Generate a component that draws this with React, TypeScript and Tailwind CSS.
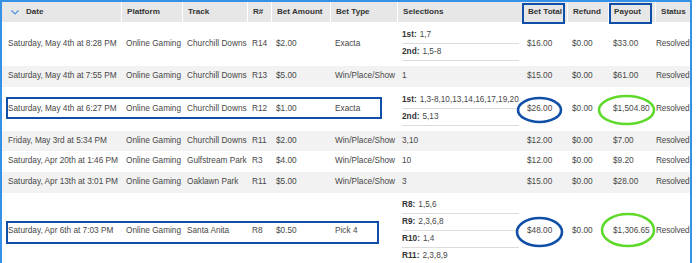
import React from "react";

type Sel = { label?: string; value: string };
type Row = {
  date: string;
  platform: string;
  track: string;
  race: string;
  amount: string;
  type: string;
  sel: Sel[];
  total: string;
  refund: string;
  payout: string;
  status: string;
  h: string;
  gray?: boolean;
};

const rows: Row[] = [
  { date: "Saturday, May 4th at 8:28 PM", platform: "Online Gaming", track: "Churchill Downs", race: "R14", amount: "$2.00", type: "Exacta", sel: [{ label: "1st:", value: "1,7" }, { label: "2nd:", value: "1,5-8" }], total: "$16.00", refund: "$0.00", payout: "$33.00", status: "Resolved", h: "h-[44px]" },
  { date: "Saturday, May 4th at 7:55 PM", platform: "Online Gaming", track: "Churchill Downs", race: "R13", amount: "$5.00", type: "Win/Place/Show", sel: [{ value: "1" }], total: "$15.00", refund: "$0.00", payout: "$61.00", status: "Resolved", h: "h-[21px]", gray: true },
  { date: "Saturday, May 4th at 6:27 PM", platform: "Online Gaming", track: "Churchill Downs", race: "R12", amount: "$1.00", type: "Exacta", sel: [{ label: "1st:", value: "1,3-8,10,13,14,16,17,19,20" }, { label: "2nd:", value: "5,13" }], total: "$26.00", refund: "$0.00", payout: "$1,504.80", status: "Resolved", h: "h-[44px]" },
  { date: "Friday, May 3rd at 5:34 PM", platform: "Online Gaming", track: "Churchill Downs", race: "R11", amount: "$2.00", type: "Win/Place/Show", sel: [{ value: "3,10" }], total: "$12.00", refund: "$0.00", payout: "$7.00", status: "Resolved", h: "h-[20px]", gray: true },
  { date: "Saturday, Apr 20th at 1:46 PM", platform: "Online Gaming", track: "Gulfstream Park", race: "R3", amount: "$4.00", type: "Win/Place/Show", sel: [{ value: "10" }], total: "$12.00", refund: "$0.00", payout: "$9.20", status: "Resolved", h: "h-[21px]" },
  { date: "Saturday, Apr 13th at 3:01 PM", platform: "Online Gaming", track: "Oaklawn Park", race: "R11", amount: "$5.00", type: "Win/Place/Show", sel: [{ value: "3" }], total: "$15.00", refund: "$0.00", payout: "$28.00", status: "Resolved", h: "h-[21px]", gray: true },
  { date: "Saturday, Apr 6th at 7:03 PM", platform: "Online Gaming", track: "Santa Anita", race: "R8", amount: "$0.50", type: "Pick 4", sel: [{ label: "R8:", value: "1,5,6" }, { label: "R9:", value: "2,3,6,8" }, { label: "R10:", value: "1,4" }, { label: "R11:", value: "2,3,8,9" }], total: "$48.00", refund: "$0.00", payout: "$1,306.65", status: "Resolved", h: "h-[76px]" },
];

const grid = "grid grid-cols-[119px_61px_65px_24px_59px_67px_125px_45px_41px_47px_35px]";
const cell = "flex items-center pl-[5px] whitespace-nowrap";

function Selections({ sel }: { sel: Sel[] }) {
  if (sel.length === 1 && !sel[0].label) {
    return <span>{sel[0].value}</span>;
  }
  return (
    <div className="flex flex-col w-[117px]">
      {sel.map((s, i) => (
        <div key={i} className="h-[17px] pt-[1px] flex items-center border-b border-[#dcdcdc]">
          <span className="font-bold text-[#333]">{s.label}</span>
          <span className="ml-[3px]">{s.value}</span>
        </div>
      ))}
    </div>
  );
}

export default function App() {
  return (
    <div className="relative w-[700px] h-[263px] overflow-hidden bg-white font-['Liberation_Sans',Arial,sans-serif] text-[8.25px] text-[#474747]">
      <div className="w-[692px] border-l-2 border-t-2 border-r-2 border-[#3491e6] h-[270px]">
        {/* header */}
        <div className={`${grid} h-[20px] bg-[#e7e7e7] font-bold text-[#333] text-[8.1px]`}>
          <div className="flex items-center pl-[9px] whitespace-nowrap">
            <svg width="8" height="5" viewBox="0 0 8 5" className="mr-[7px]">
              <polyline points="0.5,0.5 4,4 7.5,0.5" fill="none" stroke="#4a8fdc" strokeWidth="1.1" />
            </svg>
            Date
          </div>
          {["Platform", "Track", "R#", "Bet Amount", "Bet Type", "Selections", "Bet Total", "Refund", "Payout", "Status"].map((h) => (
            <div key={h} className={`${cell} border-l border-white`}>{h}</div>
          ))}
        </div>
        {rows.map((r, i) => (
          <div key={i} className={`${grid} ${r.h} ${r.gray ? "bg-[#f2f2f2]" : "bg-white"}`}>
            <div className={`${cell} pl-[6px]`}>{r.date}</div>
            <div className={cell}>{r.platform}</div>
            <div className={cell}>{r.track}</div>
            <div className={cell}>{r.race}</div>
            <div className={cell}>{r.amount}</div>
            <div className={cell}>{r.type}</div>
            <div className={cell}><Selections sel={r.sel} /></div>
            <div className={cell}>{r.total}</div>
            <div className={cell}>{r.refund}</div>
            <div className={cell}>{r.payout}</div>
            <div className="flex items-center pl-[1px] whitespace-nowrap tracking-[-0.1px]">{r.status}</div>
          </div>
        ))}
      </div>

      {/* annotation boxes */}
      <div className="absolute left-[522px] top-[3px] w-[43px] h-[21px] border-[2.5px] border-[#0f4fa8]" />
      <div className="absolute left-[609px] top-[3px] w-[43px] h-[21px] border-[2.5px] border-[#0f4fa8]" />
      <div className="absolute left-[6px] top-[97px] w-[376px] h-[22px] border-[2.5px] border-[#0f4fa8]" />
      <div className="absolute left-[6px] top-[221px] w-[373px] h-[23px] border-[2.5px] border-[#0f4fa8]" />

      <svg className="absolute left-0 top-0 pointer-events-none" width="700" height="263">
        <ellipse cx="539.5" cy="110" rx="21.5" ry="12" fill="none" stroke="#0f4fa8" strokeWidth="2.6" />
        <ellipse cx="539.5" cy="232" rx="22.5" ry="14" fill="none" stroke="#0f4fa8" strokeWidth="2.6" />
        <ellipse cx="626.5" cy="110" rx="27.5" ry="14" fill="none" stroke="#5fd92b" strokeWidth="2.6" />
        <ellipse cx="628" cy="230" rx="26" ry="16" fill="none" stroke="#5fd92b" strokeWidth="2.6" />
      </svg>
    </div>
  );
}
